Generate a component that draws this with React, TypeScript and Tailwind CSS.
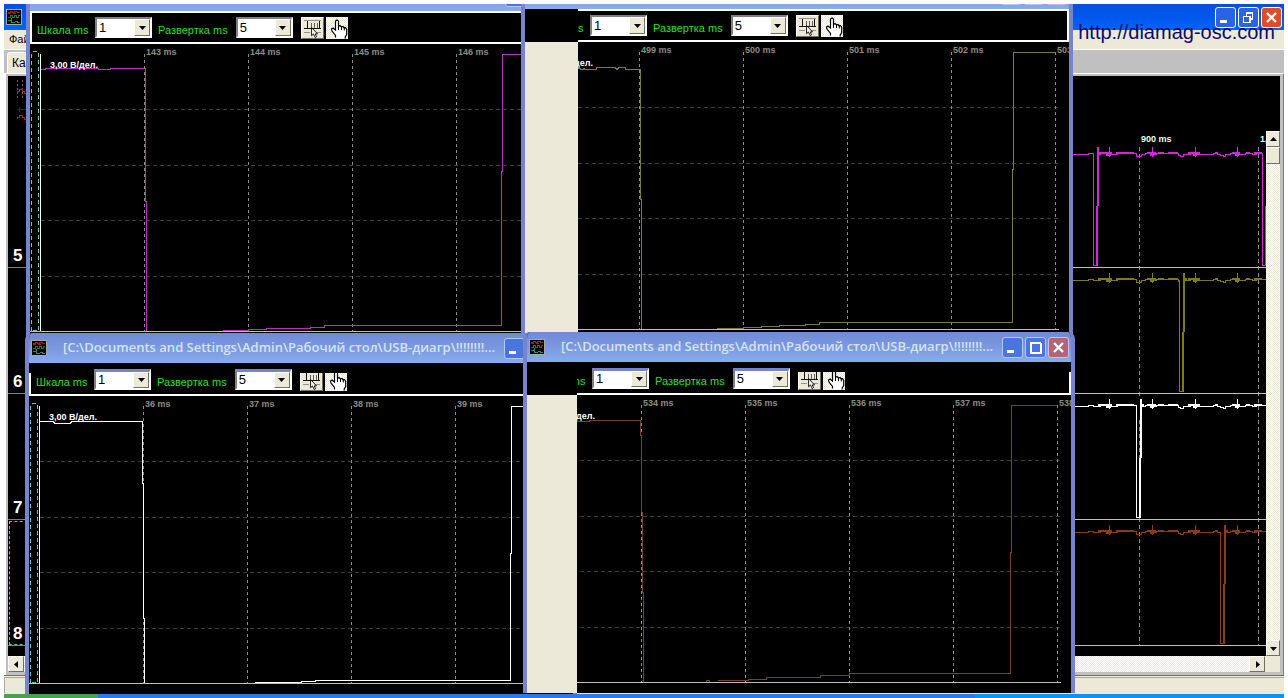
import type { ReactNode } from "react";

interface ScopeWindowProps {
  place: string;
  color: string;
  labels: string[];
  trace: string;
  framed?: boolean;
  mask?: string;
  id: string;
}

const TITLE = "[C:\\Documents and Settings\\Admin\\Рабочий стол\\USB-диагр\\!!!!!!!!...";

const CHECKER =
  "bg-[repeating-conic-gradient(#ece9d8_0_25%,#ffffff_0_50%)] bg-[length:2px_2px]";

const BEVEL =
  "bg-[#ece9d8] border border-t-white border-l-white border-r-[#716f64] border-b-[#716f64]";

function AppIcon() {
  return (
    <svg viewBox="0 0 16 16" className="block h-4 w-4 shrink-0" shapeRendering="crispEdges">
      <rect x="0.5" y="0.5" width="15" height="15" fill="#000" stroke="#a8a8a0" />
      <path d="M2 3.5h2v-1h2v1h2v-1h3v1h3M2 4.5h3M7 4.5h3" stroke="#a01c14" fill="none" />
      <path d="M2 8.5h2v-2h2v2h2v-2h2v2h2v-2h2" stroke="#1a7a30" fill="none" />
      <path d="M5.5 9v5M2 11.5h3M6 13.5h3M9 12.5h2v1h3" stroke="#189088" fill="none" />
    </svg>
  );
}

function RulerIcon() {
  return (
    <svg viewBox="0 0 23 22" className="block h-full w-full" shapeRendering="crispEdges">
      <path d="M2 2.500h19M2 15.500h7M15 15.500h6" stroke="#8c8a80" fill="none" />
      <path d="M2 11.500h19" stroke="#000" fill="none" />
      <path d="M6.500 3v8M19.500 3v8" stroke="#000" />
      <path d="M10.500 6v5M13.500 6v5M16.500 6v5" stroke="#55534c" />
      <path
        d="M10.500 10.500v9l2-2 2 4 1.500-1-1.500-3h2.500z"
        fill="#fff"
        stroke="#000"
        shapeRendering="auto"
      />
    </svg>
  );
}

function HandIcon() {
  return (
    <svg viewBox="0 0 22 22" className="block h-full w-full">
      <path
        d="M9.500 20.500v-2l-3.500-4.500-.500-2 1.500-1 2.500 2V4l1.500-1 1.500 1v5.500l1.500-1 1.500 1.500 1.500-.500 1.300 1.500 1.200-.500 1.200 2v5l-1.500 2.500v1.500"
        fill="#fff"
        stroke="#000"
        strokeWidth="1.200"
      />
      <path d="M12.500 9v4M15.500 10v3M18.300 11v2.500" stroke="#000" />
    </svg>
  );
}

function TitleButton({ label, tone, children }: { label: string; tone: string; children: ReactNode }) {
  return (
    <button aria-label={label} className={`h-[21px] w-[21px] rounded-[3px] border ${tone}`}>
      <svg viewBox="0 0 19 19" className="block h-full w-full" fill="none" shapeRendering="crispEdges">
        {children}
      </svg>
    </button>
  );
}

const minGlyph = <path d="M4 13.500h7" stroke="#fff" strokeWidth="3" />;
const maxGlyph = <path d="M4 5h11M4.500 5v9.500h10V5" stroke="#fff" strokeWidth="2" />;
const restoreGlyph = (
  <path d="M7 5h7M7.500 5v3M13.500 5v6H11M4 8.500h7M4.500 8v6.500h6.500V8" stroke="#fff" strokeWidth="1.500" />
);
const closeGlyph = (
  <path d="M5 5l9 9M14 5l-9 9" stroke="#fff" strokeWidth="2.400" shapeRendering="auto" />
);

function ComboBox({ label, value, id, raised }: { label: string; value: string; id: string; raised: boolean }) {
  return (
    <>
      <label
        htmlFor={id}
        className="mr-2 pt-1 whitespace-nowrap text-[11px] leading-4 text-[#22e022] first:w-[50px]"
      >
        {label}
      </label>
      <div
        className={`relative h-[21px] w-[57px] shrink-0 border-2 border-l-[#808080] border-r-white border-b-white bg-white ${
          raised ? "border-t-[#808080]" : "border-t-[3px] border-t-[#7684cc]"
        }`}
      >
        <select
          id={id}
          defaultValue={value}
          className="block h-full w-full appearance-none bg-white pl-[2px] text-[13px] leading-4 text-black outline-none"
        >
          <option>{value}</option>
        </select>
        <span
          className={`pointer-events-none absolute inset-y-0 right-0 flex w-4 items-center justify-center ${BEVEL}`}
        >
          <svg viewBox="0 0 7 4" className="h-1 w-[7px]">
            <path d="M0 0h7L3.500 4z" fill="#000" />
          </svg>
        </span>
      </div>
    </>
  );
}

// Grid is 104 units per division, drawn in window coordinates
function ScopeChart({ color, labels, trace }: { color: string; labels: string[]; trace: string }) {
  return (
    <svg
      viewBox="4 63 544 298"
      preserveAspectRatio="xMinYMin slice"
      className="block min-h-0 w-full flex-1 bg-black"
      shapeRendering="crispEdges"
      fill="none"
    >
      <g stroke="#3c3c3c" strokeDasharray="4 3">
        {[128, 184, 239, 295].map((y) => (
          <path key={y} d={`M15 ${y}.5H539`} />
        ))}
      </g>
      <g stroke="#8a8a8a" strokeDasharray="3 3">
        {labels.map((text, i) => (
          <path key={text} d={`M${118 + i * 104}.5 73V350`} />
        ))}
      </g>
      <path d="M5.500 349.500V70.500H12.500V349.500Z" stroke="#58c8c8" strokeDasharray="4 3" />
      <path d="M14.500 73V350" stroke="#fff" />
      <path d="M4 350.500H538" stroke="#c0c0c0" />
      <path d={trace} stroke={color} />
      <g fontSize="9" fontWeight="bold" fill="#8c8c84">
        {labels.map((text, i) => (
          <text key={text} x={120 + i * 104} y="74">
            {text}
          </text>
        ))}
        <text x="24" y="87" fill="#fff">
          3,00 В/дел.
        </text>
      </g>
    </svg>
  );
}

function ScopeWindow({ place, color, labels, trace, framed = false, mask, id }: ScopeWindowProps) {
  return (
    <section
      className={`absolute flex h-[361px] w-[552px] flex-col overflow-hidden rounded-t-[7px] border-x-4 border-[#7684cc] bg-black ${place}`}
    >
      <header className="flex h-[30px] shrink-0 items-center bg-linear-to-b from-[#6f8ad6] via-[#7b98e0] to-[#86aeea] pr-[2px] pl-[2px]">
        <AppIcon />
        <h2 className="ml-4 flex-1 whitespace-nowrap font-['Open_Sans'] text-[13px] font-semibold text-[#d6e2f8]">
          {TITLE}
        </h2>
        <div className="flex gap-[2px]">
          <TitleButton label="Свернуть" tone="border-[#b4c8f4] bg-[#4a74e0]">{minGlyph}</TitleButton>
          <TitleButton label="Развернуть" tone="border-[#b4c8f4] bg-[#4a74e0]">{maxGlyph}</TitleButton>
          <TitleButton label="Закрыть" tone="border-[#d0c0e0] bg-[#b46478]">{closeGlyph}</TitleButton>
        </div>
      </header>

      <div
        className={`relative flex h-[33px] shrink-0 items-center border-2 border-white pl-[5px] ${
          framed
            ? ""
            : "border-t-black before:absolute before:-inset-x-[2px] before:-top-[2px] before:h-[10px] before:bg-black"
        }`}
      >
        <ComboBox label="Шкала ms" value="1" id={`${id}-scale`} raised={framed} />
        <span className="w-[6px]" />
        <ComboBox label="Развертка ms" value="5" id={`${id}-sweep`} raised={framed} />
        <button aria-label="Линейка" className={`ml-2 h-[22px] w-[23px] ${BEVEL}`}>
          <RulerIcon />
        </button>
        <button aria-label="Рука" className={`ml-[2px] h-[22px] w-[22px] ${CHECKER}`}>
          <HandIcon />
        </button>
      </div>

      <ScopeChart color={color} labels={labels} trace={trace} />

      {mask && (
        <div className={`absolute top-[30px] bottom-0 left-0 flex flex-col ${mask}`}>
          <div className="h-[33px] bg-black" />
          <div className="flex-1 bg-[#ece9d8]" />
        </div>
      )}
    </section>
  );
}

const scopeWindows: ScopeWindowProps[] = [
  {
    id: "w5",
    place: "left-[26px] top-[-19px]",
    color: "#c828c8",
    framed: true,
    labels: ["143 ms", "144 ms", "145 ms", "146 ms", "147 ms"],
    trace:
      "M15 88.500H19V87.500H72V88.500H84V87.500H119.500V220H120.500V350M197 349.500H222V348.500H240V347.500H284V346.500H298V344.500H475.500V190H476.500V73.500H534",
  },
  {
    id: "w6",
    place: "left-[521px] top-[-21px]",
    color: "#7c7c34",
    framed: true,
    mask: "w-[53px]",
    labels: ["499 ms", "500 ms", "501 ms", "502 ms", "503 ms"],
    trace:
      "M50 89.500H59V90.500H62V89.500L65 90.500H75V88.500H94L96 90.500 98 88.500H104V90.500H119.500V220H120.500V350M196 349.500H222V348.500H240V347.500H258V346.500H284V345.500H298V343.500H491.500V190H492.500V73.500H534",
  },
  {
    id: "w7",
    place: "left-[25px] top-[333px]",
    color: "#ffffff",
    labels: ["36 ms", "37 ms", "38 ms", "39 ms", "40 ms"],
    trace:
      "M15 88.500H28L30 90.500H45L47 88.500H117.500V150H118.500V285H119.500V350M230 349.500H276V348.500H290V347.500H485.500V220H486.500V73.500H534",
  },
  {
    id: "w8",
    place: "left-[523px] top-[332px]",
    color: "#7a4028",
    mask: "w-[50px]",
    labels: ["534 ms", "535 ms", "536 ms", "537 ms", "538 ms"],
    trace:
      "M50 89.500H66V88.500H117.500V103H118.500V180H119.500V260H120.500V350M183 350V348.500H186V350M195 348.500H225V347.500H243V345.500H297V343.500H326V341.500H487.500V220H488.500V73.500H534",
  },
];

const channels = [
  { name: "5", color: "#e020e0", pulses: [1093, 1262] },
  { name: "6", color: "#7c7c18", pulses: [1179] },
  { name: "7", color: "#ffffff", pulses: [1136] },
  { name: "8", color: "#8c3c14", pulses: [1220] },
];

const NOISE =
  "M1073 154.500H1088V153.500H1093V154.500H1100V153.500H1109V147V157V154.500H1117V153.500H1136V156.500H1141V154.500H1145V153.500H1152V147V157V154.500H1156V153.500H1178V155.500H1180V156.500H1183V154.500H1190V153.500H1195V147V157V154.500H1213V153.500H1217V154.500H1220V155.500H1223V156.500H1225V154.500H1230V153.500H1237V147V157V154.500H1245V153.500H1252V154.500H1256V153.500H1266";

function MainChart() {
  return (
    <svg
      viewBox="1073 131 193 525"
      preserveAspectRatio="xMaxYMin slice"
      className="ml-auto block h-full w-[193px]"
      shapeRendering="crispEdges"
      fill="none"
    >
      <path d="M1139.500 147V645M1258.500 147V645" stroke="#8a8a8a" strokeDasharray="4 3" />
      {channels.map((channel, i) => (
        <g key={channel.name} transform={`translate(0 ${i * 126})`} stroke={channel.color}>
          <path d="M1073 267.500H1266" stroke="#c0c0c0" />
          <path d={NOISE} />
          <path
            d="M1098 153H1112M1116 153H1134M1147 153H1156M1158 153H1164M1168 153H1178M1188 153H1200M1215 153H1218M1232 153H1240M1246 153H1250M1254 153H1262M1106 155H1111M1150 155H1154M1193 155H1197M1235 155H1239"
            strokeWidth="2"
          />
          {channel.pulses.map((x) => (
            <g key={x}>
              <rect x={x + 1} y="146" width="4" height="20" fill="#000" stroke="none" />
              <path d={`M${x}.5 154V265.500H${x + 4}`} strokeWidth="1" />
              <path d={`M${x + 4} 266V206M${x + 5} 206V147M${x + 5} 153H${x + 8}`} strokeWidth="2" />
            </g>
          ))}
        </g>
      ))}
      <g fontSize="9" fontWeight="bold" fill="#e8ffe8">
        <text x="1141" y="142">900 ms</text>
        <text x="1260" y="142">1,0</text>
      </g>
    </svg>
  );
}

function ScrollButton({ label, d, size }: { label: string; d: string; size: string }) {
  return (
    <button aria-label={label} className={`flex shrink-0 items-center justify-center ${size} ${BEVEL}`}>
      <svg viewBox="0 0 7 7" className="h-[7px] w-[7px]">
        <path d={d} fill="#000" />
      </svg>
    </button>
  );
}

export default function App() {
  return (
    <main className="relative flex h-screen flex-col overflow-hidden bg-white px-1 pt-1 font-['Liberation_Sans',sans-serif]">
      <div className="flex min-h-0 flex-1 flex-col">
        <header className="flex h-[26px] shrink-0 items-center justify-between bg-linear-to-b from-[#0a50d8] via-[#0058ee] to-[#0464fa] pr-[2px] pl-[2px]">
          <AppIcon />
          <div className="flex gap-[2px]">
            <TitleButton label="Свернуть" tone="border-white bg-[#2c62e4]">{minGlyph}</TitleButton>
            <TitleButton label="Восстановить" tone="border-white bg-[#2c62e4]">{restoreGlyph}</TitleButton>
            <TitleButton label="Закрыть" tone="border-white bg-[#e04c28]">{closeGlyph}</TitleButton>
          </div>
        </header>
        <nav className="flex h-5 shrink-0 items-center border-b border-white bg-[#ece9d8] pl-[5px] text-[11px]">
          <button>Файл</button>
        </nav>
        <div className="flex h-[23px] shrink-0 items-end bg-[#c0c0c0] pl-[3px]">
          <button className="h-[21px] rounded-t-[3px] border-t border-l border-white bg-[#ece9d8] px-1 text-[12px]">
            Канал
          </button>
        </div>

        <div className="flex min-h-0 flex-1 flex-col border-t border-r border-l-2 border-t-white border-r-[#808080] border-l-white bg-[#c0c0c0] pt-[2px] pr-[3px] pb-[3px] pl-[2px]">
          <div className="h-[55px] shrink-0 bg-black pl-2">
            <svg viewBox="0 0 14 50" className="h-[50px] w-[14px]" fill="none" shapeRendering="crispEdges">
              <path d="M1.500 4v20M6.500 4v20M11.500 4v20" stroke="#666" strokeDasharray="2 2" />
              <path d="M1 17v-2h2v-2h3v2h2v2h2v-2h4M1 43v-2h2v-2h3v2h2v2h2v-2h4" stroke="#c01818" />
              <path d="M1 33.500h13M3.500 31v5" stroke="#1818c0" />
            </svg>
          </div>
          <div className="flex min-h-0 flex-1 bg-black">
            <div className="w-5 pt-[11px]">
              {channels.map((channel) => (
                <div
                  key={channel.name}
                  className="flex h-[126px] items-end border-b border-[#808080] pl-px"
                >
                  <span
                    className={`flex h-[124px] w-full items-end border pl-[3px] text-[17px] leading-5 font-bold text-white ${
                      channel.name === "8" ? "border-dashed border-[#58c8c8]" : "border-transparent"
                    }`}
                  >
                    {channel.name}
                  </span>
                </div>
              ))}
            </div>
            <MainChart />
            <div className={`flex w-[14px] shrink-0 flex-col ${CHECKER}`}>
              <ScrollButton label="Вверх" d="M0 5h7L3.500 1z" size="h-4 w-full" />
              <div className={`h-[17px] ${BEVEL}`} />
              <div className="flex-1" />
              <ScrollButton label="Вниз" d="M0 2h7L3.500 6z" size="h-4 w-full" />
            </div>
          </div>
          <div className={`flex h-4 shrink-0 justify-between ${CHECKER}`}>
            <ScrollButton label="Влево" d="M5 0v7L1 3.500z" size="h-4 w-4" />
            <div className="flex">
              <ScrollButton label="Вправо" d="M2 0v7L6 3.500z" size="h-4 w-4" />
              <div className="w-[15px] bg-[#ece9d8]" />
            </div>
          </div>
        </div>
        <footer className="h-[19px] shrink-0 border-t border-[#716f64] bg-[#ece9d8] pt-px">
          <div className="h-4 border-t border-l border-[#aca899]" />
        </footer>
      </div>
      <div className="flex h-1 shrink-0">
        <div className="w-[94px] bg-[#4ca04c]" />
        <div className="flex-[5] bg-[#3078e8]" />
        <div className="w-[309px] bg-[#0c94f0]" />
      </div>

      <a href="#site" className="absolute top-5 right-[13px] text-[20px] leading-6 text-[#0c0c6c]">
        http://diamag-osc.com
      </a>

      <div className="pointer-events-none absolute inset-x-0 top-1 bottom-1 overflow-hidden">
        <div className="pointer-events-auto absolute -top-1 left-0">
          {scopeWindows.map((item) => (
            <ScopeWindow key={item.id} {...item} />
          ))}
        </div>
      </div>
    </main>
  );
}
